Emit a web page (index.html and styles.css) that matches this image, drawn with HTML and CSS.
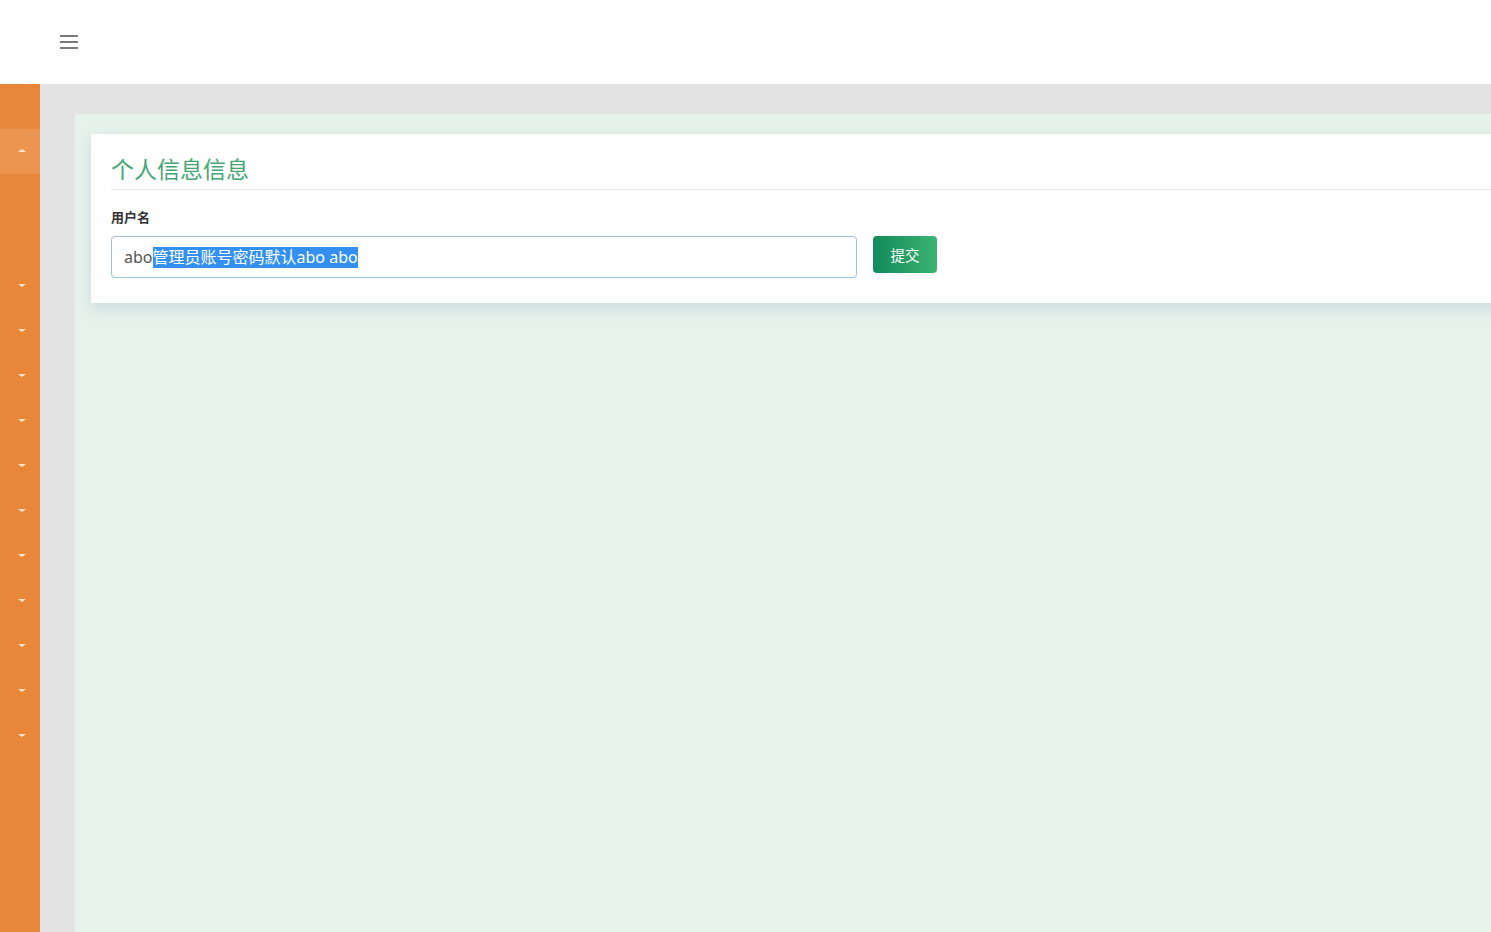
FILE: index.html
```html
<!DOCTYPE html>
<html lang="zh-CN">
  <head>
    <meta charset="UTF-8" />
    <meta name="viewport" content="width=device-width, initial-scale=1.0" />
    <title>个人信息</title>
    <link rel="stylesheet" href="styles.css">
  </head>
  <body>
    <header class="topbar">
      <button class="menu-toggle" type="button">
        <span></span><span></span><span></span>
      </button>
    </header>
    <div class="layout">
      <nav class="sidebar">
        <div class="nav-item"></div>
        <div class="nav-item active"><i class="caret up"></i></div>
        <div class="nav-item"></div>
        <div class="nav-item"></div>
        <div class="nav-item"><i class="caret"></i></div>
        <div class="nav-item"><i class="caret"></i></div>
        <div class="nav-item"><i class="caret"></i></div>
        <div class="nav-item"><i class="caret"></i></div>
        <div class="nav-item"><i class="caret"></i></div>
        <div class="nav-item"><i class="caret"></i></div>
        <div class="nav-item"><i class="caret"></i></div>
        <div class="nav-item"><i class="caret"></i></div>
        <div class="nav-item"><i class="caret"></i></div>
        <div class="nav-item"><i class="caret"></i></div>
        <div class="nav-item"><i class="caret"></i></div>
      </nav>
      <main class="main">
        <div class="content">
          <form class="card">
            <h2 class="card-title">个人信息信息</h2>
            <label class="field-label">用户名</label>
            <div class="form-row">
              <div class="text-input">abo<span class="selected">管理员账号密码默认abo abo</span></div>
              <button class="btn-submit" type="button">提交</button>
            </div>
          </form>
        </div>
      </main>
    </div>
  </body>
</html>
```

FILE: styles.css
```css
* {
  box-sizing: border-box;
}

html, body {
  margin: 0;
  height: 100%;
  overflow: hidden;
}

body {
  font-family: "Noto Sans", "Noto Sans CJK SC", sans-serif;
  color: #333;
  background: #fff;
}

.topbar {
  height: 84px;
  background: #fefefe;
  display: flex;
  align-items: center;
  padding-left: 60px;
}

.menu-toggle {
  width: 18px;
  height: 14px;
  padding: 0;
  border: 0;
  background: none;
  display: flex;
  flex-direction: column;
  justify-content: space-between;
  margin-top: -1px;
}

.menu-toggle span {
  display: block;
  height: 2px;
  background: #7a7a7a;
}

.layout {
  display: flex;
  height: 848px;
}

.sidebar {
  width: 40px;
  flex-shrink: 0;
  background: #e8873a;
}

.nav-item {
  height: 45px;
  display: flex;
  align-items: center;
  justify-content: center;
  padding-left: 4px;
  padding-bottom: 3px;
}

.nav-item.active {
  background: #ec9550;
}

.caret {
  width: 0;
  height: 0;
  border-left: 4px solid transparent;
  border-right: 4px solid transparent;
  border-top: 3px solid #fbe6cf;
}

.caret.up {
  border-top: 0;
  border-bottom: 3px solid #fbe6cf;
}

.main {
  flex: 1;
  background: #e3e3e3;
  padding: 30px 0 0 35px;
}

.content {
  height: 100%;
  background: #e6f2ec;
  padding: 20px 0 0 16px;
}

.card {
  width: 1440px;
  background: #fefefe;
  padding: 20px 20px 25px;
  box-shadow: 0 6px 14px rgba(170, 190, 205, 0.45);
}

.card-title {
  margin: 0;
  font-size: 23px;
  font-weight: normal;
  color: #45a673;
  line-height: 30px;
  padding-bottom: 5px;
  border-bottom: 1px solid #e6e9ec;
}

.field-label {
  display: block;
  margin-top: 18px;
  font-size: 13px;
  font-weight: bold;
  color: #333;
  line-height: 18px;
}

.form-row {
  display: flex;
  align-items: flex-start;
  gap: 16px;
  margin-top: 10px;
}

.text-input {
  width: 746px;
  height: 42px;
  border: 1px solid #9fc0dc;
  border-radius: 4px;
  padding: 0 12px;
  display: flex;
  align-items: center;
  font-size: 16px;
  color: #555;
  white-space: pre;
}

.selected {
  background: #3390f0;
  color: #fff;
  line-height: 21px;
}

.btn-submit {
  width: 64px;
  height: 37px;
  border: 0;
  border-radius: 4px;
  background: linear-gradient(to right, #128a5b, #3cb472);
  color: #fff;
  font-family: inherit;
  font-size: 14.5px;
  padding: 0;
}
```
